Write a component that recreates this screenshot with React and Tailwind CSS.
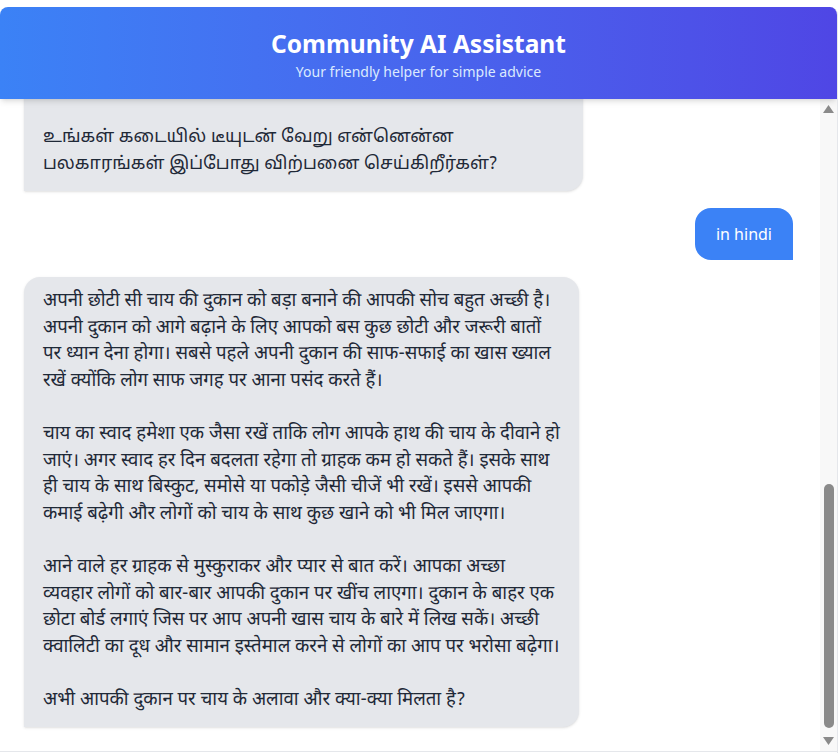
import React, { useLayoutEffect, useRef } from 'react';

const messages = [
  {
    role: 'ai',
    text: 'Hello! I am your Community AI Assistant. Ask me anything about your small business, health, farming or daily life, and I will try to give you simple advice.',
  },
  { role: 'user', text: 'I run a small tea shop. How can I make it bigger?' },
  { role: 'user', text: 'in tamil' },
  {
    role: 'ai',
    lang: 'ta',
    text:
      'உங்கள் சிறிய டீக்கடையை பெரிதாக வளர்க்க வேண்டும் என்ற உங்கள் எண்ணம் மிகவும் நல்லது. அதற்கு நீங்கள் சில சிறிய ஆனால் முக்கியமான விஷயங்களில் கவனம் செலுத்த வேண்டும். முதலில் உங்கள் கடையை எப்போதும் சுத்தமாக வைத்திருங்கள்.\n\n' +
      'டீயின் சுவையை எப்போதும் ஒரே மாதிரியாக வைத்திருங்கள். சுவை தினமும் மாறினால் வாடிக்கையாளர்கள் குறையலாம். டீயுடன் பிஸ்கட், சமோசா அல்லது பஜ்ஜி போன்றவற்றையும் விற்பனை செய்யுங்கள்.\n\n' +
      'ஒவ்வொரு வாடிக்கையாளரிடமும் புன்னகையுடன் அன்பாகப் பேசுங்கள். கடையின் வெளியே ஒரு சிறிய பலகையை வைத்து உங்கள் சிறப்பு டீ பற்றி எழுதுங்கள்.\n\n' +
      'உங்கள் கடையில் டீயுடன் வேறு என்னென்ன\nபலகாரங்கள் இப்போது விற்பனை செய்கிறீர்கள்?',
  },
  { role: 'user', text: 'in hindi' },
  {
    role: 'ai',
    lang: 'hi',
    text:
      'अपनी छोटी सी चाय की दुकान को बड़ा बनाने की आपकी सोच बहुत अच्छी है।\nअपनी दुकान को आगे बढ़ाने के लिए आपको बस कुछ छोटी और जरूरी बातों\nपर ध्यान देना होगा। सबसे पहले अपनी दुकान की साफ-सफाई का खास ख्याल\nरखें क्योंकि लोग साफ जगह पर आना पसंद करते हैं।\n\n' +
      'चाय का स्वाद हमेशा एक जैसा रखें ताकि लोग आपके हाथ की चाय के दीवाने हो\nजाएं। अगर स्वाद हर दिन बदलता रहेगा तो ग्राहक कम हो सकते हैं। इसके साथ\nही चाय के साथ बिस्कुट, समोसे या पकोड़े जैसी चीजें भी रखें। इससे आपकी\nकमाई बढ़ेगी और लोगों को चाय के साथ कुछ खाने को भी मिल जाएगा।\n\n' +
      'आने वाले हर ग्राहक से मुस्कुराकर और प्यार से बात करें। आपका अच्छा\nव्यवहार लोगों को बार-बार आपकी दुकान पर खींच लाएगा। दुकान के बाहर एक\nछोटा बोर्ड लगाएं जिस पर आप अपनी खास चाय के बारे में लिख सकें। अच्छी\nक्वालिटी का दूध और सामान इस्तेमाल करने से लोगों का आप पर भरोसा बढ़ेगा।\n\n' +
      'अभी आपकी दुकान पर चाय के अलावा और क्या-क्या मिलता है?',
  },
];

function Bubble({ role, lang, text }) {
  if (role === 'user') {
    return (
      <div className="flex justify-end">
        <div className="max-w-[559px] rounded-2xl rounded-br-none bg-[#3b82f6] px-[21px] py-[13px] text-white whitespace-pre-line">
          {text}
        </div>
      </div>
    );
  }
  const langClass =
    lang === 'hi'
      ? "text-[18.6px] font-['Noto_Sans_Devanagari','Lohit_Devanagari','Noto_Sans',sans-serif]"
      : lang === 'ta'
        ? "text-[17.8px] font-['Noto_Sans_Tamil','Noto_Sans',sans-serif]"
        : '';
  return (
    <div className="flex justify-start">
      <div
        className={`max-w-[559px] rounded-2xl rounded-bl-none bg-[#e5e7eb] px-[19px] py-3 text-[#1f2937] shadow-sm whitespace-pre-line ${langClass}`}
      >
        {text}
      </div>
    </div>
  );
}

// the window's scrollbar, drawn because the screenshot hides native ones
function ScrollStrip() {
  return (
    <div className="flex w-[17px] shrink-0 flex-col bg-[#f8f8f8]">
      <svg width="17" height="17" viewBox="0 0 17 17">
        <polygon points="3,14 8.5,6 14,14" fill="#8a8a8a" />
      </svg>
      <div className="flex flex-1 flex-col justify-end pb-[6px]">
        <div className="ml-[4px] h-[244px] w-[10px] rounded-full bg-[#8a8a8a]" />
      </div>
      <svg width="17" height="17" viewBox="0 0 17 17">
        <polygon points="3,3 14,3 8.5,11" fill="#8a8a8a" />
      </svg>
    </div>
  );
}

export default function App() {
  const scroller = useRef(null);

  useLayoutEffect(() => {
    if (scroller.current) scroller.current.scrollTop = scroller.current.scrollHeight;
  }, []);

  return (
    <div className="h-[753px] overflow-hidden bg-white pt-[7px] font-['Noto_Sans','Open_Sans',sans-serif]">
      <div className="w-[838px] overflow-hidden rounded-t-lg border-r border-gray-200 bg-white">
        <header className="relative z-10 bg-gradient-to-r from-[#3b82f6] to-[#4f46e5] pt-[21px] pb-[17px] text-center text-white shadow-md">
          <h1 className="text-[24.5px] font-bold leading-[32px]">Community AI Assistant</h1>
          <p className="mt-[2px] text-[14px] leading-[20px] text-[#dbeafe]">Your friendly helper for simple advice</p>
        </header>

        <div className="flex h-[652px]">
          <div
            ref={scroller}
            className="flex flex-1 flex-col gap-[17px] overflow-y-auto py-6 pl-6 pr-[27px] text-[16px] leading-[26.6px] [scrollbar-width:none]"
          >
            {messages.map((m, i) => (
              <Bubble key={i} role={m.role} lang={m.lang} text={m.text} />
            ))}
          </div>
          <ScrollStrip />
        </div>

        <div className="flex items-center gap-3 border-t border-gray-200 p-4">
          <input
            className="flex-1 rounded-full border border-gray-300 px-4 py-2 text-sm"
            placeholder="Type your message..."
          />
          <button className="rounded-full bg-[#3b82f6] px-5 py-2 text-sm text-white">Send</button>
        </div>
      </div>
    </div>
  );
}
